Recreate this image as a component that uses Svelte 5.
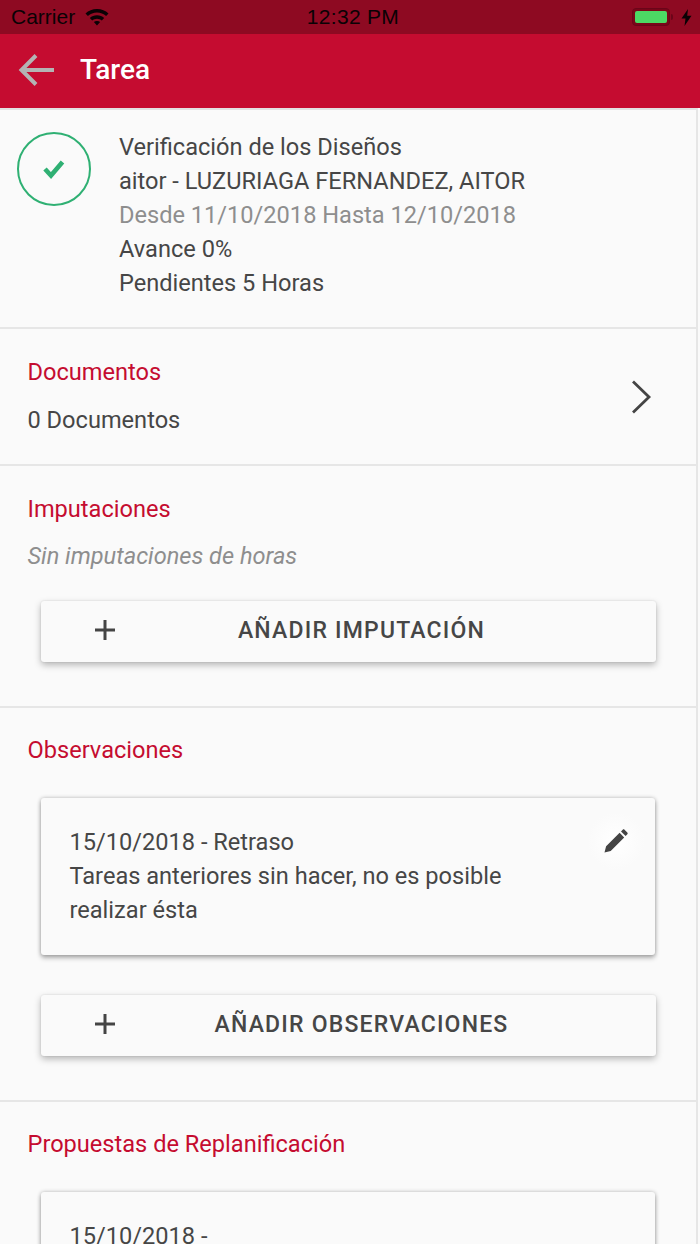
<script lang="ts">
  const summary = {
    title: 'Verificación de los Diseños',
    person: 'aitor - LUZURIAGA FERNANDEZ, AITOR',
    range: 'Desde 11/10/2018 Hasta 12/10/2018',
    progress: 'Avance 0%',
    pending: 'Pendientes 5 Horas',
  };
</script>

{#snippet plus()}
  <svg class="plus" width="22" height="22" viewBox="0 0 22 22" aria-hidden="true">
    <path d="M9.500 1h3v8.500H21v3h-8.500V21h-3v-8.500H1v-3h8.500z" fill="#444" />
  </svg>
{/snippet}

{#snippet pencil()}
  <svg width="26" height="26" viewBox="0 0 26 26" aria-hidden="true">
    <path d="M1.500 24.500l1.600-6.200L16.600 4.800l4.600 4.600L7.700 22.900z M18 3.400l1.700-1.700c.5-.5 1.300-.5 1.800 0l2.800 2.800c.5.5.5 1.300 0 1.800L22.600 8z" fill="#444" />
  </svg>
{/snippet}

<div class="screen">
  <div class="status">
    <div class="status-left">
      <span>Carrier</span>
      <svg width="24" height="18" viewBox="0 0 24 18" aria-hidden="true">
        <path d="M12 1C7.500 1 3.500 2.700.5 5.500l2.400 2.500C5.300 5.800 8.500 4.400 12 4.400s6.700 1.400 9.100 3.600l2.400-2.500C20.500 2.700 16.500 1 12 1z M12 7.200c-2.800 0-5.300 1-7.200 2.800l2.400 2.500c1.300-1.100 3-1.800 4.800-1.800s3.500.7 4.800 1.800l2.400-2.500C17.300 8.200 14.800 7.200 12 7.200z M12 13c-1.200 0-2.300.4-3.100 1.100l3.100 3.400 3.100-3.400C14.300 13.400 13.200 13 12 13z" fill="#0a0205" />
      </svg>
    </div>
    <span class="clock">12:32 PM</span>
    <div class="status-right">
      <div class="battery"><div class="charge"></div></div>
      <div class="nub"></div>
      <svg width="11" height="17" viewBox="0 0 11 17" aria-hidden="true">
        <path d="M7 0L0.500 9.500H4.500L3.500 17L10.500 6.800H6.200z" fill="#0a0205" />
      </svg>
    </div>
  </div>

  <header class="appbar">
    <svg class="back" width="38" height="38" viewBox="0 0 38 38" aria-hidden="true">
      <path d="M37 19H4.500M19 4.500L4.500 19L19 33.500" fill="none" stroke="#b4b4b4" stroke-width="4" />
    </svg>
    <h1>Tarea</h1>
  </header>

  <main class="content">
    <section class="summary">
      <div class="check">
        <svg width="22" height="20" viewBox="0 0 22 20" aria-hidden="true">
          <path d="M2 10l6 6.500L19.500 3" fill="none" stroke="#2fb073" stroke-width="4.600" />
        </svg>
      </div>
      <div class="lines">
        <div>{summary.title}</div>
        <div>{summary.person}</div>
        <div class="muted">{summary.range}</div>
        <div>{summary.progress}</div>
        <div>{summary.pending}</div>
      </div>
    </section>

    <section class="docs">
      <div>
        <h2>Documentos</h2>
        <p class="value">0 Documentos</p>
      </div>
      <svg width="24" height="36" viewBox="0 0 24 36" aria-hidden="true">
        <path d="M3 2.500L19 18L3 33.500" fill="none" stroke="#444" stroke-width="2.800" />
      </svg>
    </section>

    <section class="imput">
      <h2>Imputaciones</h2>
      <p class="value empty">Sin imputaciones de horas</p>
      <button type="button" class="action">
        {@render plus()}
        <span>AÑADIR IMPUTACIÓN</span>
      </button>
    </section>

    <section class="obs">
      <h2>Observaciones</h2>
      <article class="card">
        <div class="edit">{@render pencil()}</div>
        <div>15/10/2018 - Retraso</div>
        <div class="note">Tareas anteriores sin hacer, no es posible realizar ésta</div>
      </article>
      <button type="button" class="action">
        {@render plus()}
        <span>AÑADIR OBSERVACIONES</span>
      </button>
    </section>

    <section class="replan">
      <h2>Propuestas de Replanificación</h2>
      <article class="card">
        <div>15/10/2018 -</div>
      </article>
    </section>
  </main>
</div>

<style>
  :global(body) {
    margin: 0;
    background: #fafafa;
  }

  .screen {
    width: 700px;
    height: 1244px;
    overflow: hidden;
    font-family: Roboto, "Liberation Sans", sans-serif;
    color: #464646;
    background: #fafafa;
  }

  .status {
    height: 34px;
    display: grid;
    grid-template-columns: 1fr auto 1fr;
    align-items: center;
    padding: 0 8px 0 11px;
    background: #8e0a22;
    color: #0a0205;
    font-family: "Liberation Sans", Arial, sans-serif;
    font-size: 21px;
  }

  .status-left {
    display: flex;
    align-items: center;
    gap: 10px;
  }

  .clock {
    margin-left: 3px;
    letter-spacing: 0.3px;
  }

  .status-right {
    display: flex;
    align-items: center;
    justify-content: flex-end;
  }

  .battery {
    width: 38px;
    height: 18px;
    box-sizing: border-box;
    padding: 2px;
    border: 1px solid #6b0519;
    border-radius: 4px;
    background: #7a0519;
  }

  .charge {
    height: 100%;
    border-radius: 2px;
    background: #4cd964;
  }

  .nub {
    width: 2px;
    height: 6px;
    margin: 0 8px 0 1px;
    border-radius: 0 2px 2px 0;
    background: #6b0519;
  }

  .appbar {
    height: 74px;
    box-sizing: border-box;
    display: flex;
    align-items: center;
    padding: 0 0 3px 17px;
    background: #c50c30;
  }

  .back {
    flex: none;
  }

  .appbar h1 {
    margin: 0 0 0 25px;
    color: #fff;
    font-size: 28px;
    font-weight: 500;
  }

  .content {
    height: 1136px;
    box-sizing: border-box;
    width: 698px;
    border-top: 2px solid #e2e2e2;
    border-right: 2px solid #e6e6e6;
    font-size: 23.6px;
    line-height: 34px;
  }

  section {
    box-sizing: border-box;
    border-bottom: 2px solid #e6e6e6;
  }

  h2 {
    margin: 0;
    color: #c50c30;
    font-size: 23.6px;
    font-weight: 400;
    line-height: 34px;
  }

  .value {
    margin: 14px 0 0;
  }

  .summary {
    height: 219px;
    display: flex;
    padding: 22px 0 0 17px;
  }

  .check {
    flex: none;
    width: 74px;
    height: 74px;
    box-sizing: border-box;
    display: flex;
    align-items: center;
    justify-content: center;
    border: 2px solid #2fb073;
    border-radius: 50%;
  }

  .lines {
    margin: -2px 0 0 28px;
  }

  .muted {
    color: #8e8e8e;
  }

  .docs {
    height: 137px;
    display: flex;
    align-items: center;
    justify-content: space-between;
    padding: 0 42px 0 27.500px;
  }

  .docs > div {
    padding-bottom: 2px;
  }

  .imput {
    height: 242px;
    padding: 26px 42px 0 27.500px;
  }

  .imput .value {
    margin-top: 13px;
  }

  .empty {
    color: #8e8e8e;
    font-style: italic;
  }

  .action {
    display: flex;
    align-items: center;
    width: 615px;
    height: 61px;
    margin: 28px 0 0 13.500px;
    padding: 0 0 0 53px;
    border: 0;
    border-radius: 3px;
    background: #fafafa;
    box-shadow: 0 3px 7px rgba(0, 0, 0, 0.28), 0 0 2px rgba(0, 0, 0, 0.12);
    color: #464646;
    font-family: inherit;
    font-size: 23px;
    font-weight: 500;
    letter-spacing: 1.2px;
  }

  .action span {
    flex: 1;
    padding: 0 49px 3px 0;
    text-align: center;
  }

  .plus {
    flex: none;
    margin-bottom: 4px;
  }

  .obs {
    height: 394px;
    padding: 25px 42px 0 27.500px;
  }

  .card {
    position: relative;
    width: 614px;
    box-sizing: border-box;
    margin: 31px 0 0 13.500px;
    padding: 27px 28px 28px 28.500px;
    border-radius: 3px;
    background: #fafafa;
    box-shadow: 0 3px 5px rgba(0, 0, 0, 0.28), 0 0 4px rgba(0, 0, 0, 0.24);
  }

  .note {
    max-width: 470px;
  }

  .edit {
    position: absolute;
    top: 14px;
    right: 10px;
    width: 58px;
    height: 58px;
    display: flex;
    align-items: center;
    justify-content: center;
    border-radius: 50%;
    background: radial-gradient(circle, #fefefe 15%, #fafafa 70%);
  }

  .obs .action {
    margin-top: 40px;
  }

  .replan {
    border-bottom: 0;
    padding: 25px 42px 0 27.500px;
  }
</style>
